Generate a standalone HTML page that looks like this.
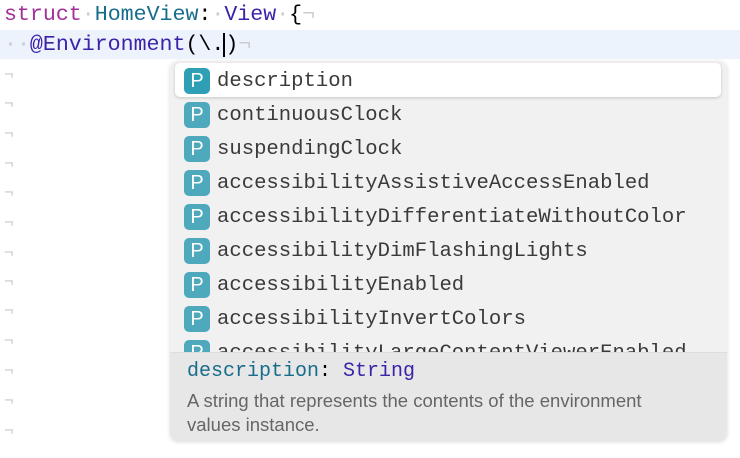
<!DOCTYPE html>
<html><head><style>
body{margin:0;width:740px;height:458px;background:#fff;position:relative;overflow:hidden;font-family:"Liberation Mono",monospace;}
.m{position:absolute;font-size:21.6px;white-space:pre;line-height:28px;}
.hl{position:absolute;left:0;top:30px;width:740px;height:29px;background:#ecf3fc;}
.ret{position:absolute;left:4px;color:#c8c8c8;font-size:16px;}
.pop{position:absolute;left:170px;top:61px;width:557px;height:380px;background:#f1f1f1;border-radius:8px;box-shadow:0 1px 4px rgba(0,0,0,.15);overflow:hidden;}
.row{position:absolute;left:0;width:557px;height:34px;}
.sel{position:absolute;left:5px;top:2px;width:546px;height:34px;background:#fff;border-radius:5px;box-shadow:0 1px 3px rgba(0,0,0,.18);}
.ic{position:absolute;left:14px;width:26px;height:26px;border-radius:5px;background:#4fa9bc;color:#fff;font-family:"Liberation Sans",sans-serif;font-size:20px;text-align:center;line-height:26px;}
.t{position:absolute;left:47px;top:2px;font-size:20.6px;color:#3a3a3a;white-space:pre;line-height:34px;}
.det{position:absolute;left:0;top:291px;width:557px;height:89px;background:#e7e7e7;border-top:1px solid #ddd;}
</style></head><body>
<div class="hl"></div>
<div class="m" style="left:4px;top:1px"><span style="color:#a2309a">struct</span><span style="color:#ccc">·</span><span style="color:#176c8c">HomeView</span>:<span style="color:#ccc">·</span><span style="color:#3c22a8">View</span><span style="color:#ccc">·</span>{<span style="color:#ccc">¬</span></div>
<div class="m" style="left:4px;top:31px"><span style="color:#ccc">··</span><span style="color:#3c22a8">@Environment</span>(\.<span style="border-left:2px solid #000;margin-left:-1px"></span>)<span style="color:#ccc">¬</span></div>
<div class="ret" style="top:66px">¬</div><div class="ret" style="top:95px">¬</div><div class="ret" style="top:125px">¬</div><div class="ret" style="top:155px">¬</div><div class="ret" style="top:184px">¬</div><div class="ret" style="top:214px">¬</div><div class="ret" style="top:244px">¬</div><div class="ret" style="top:273px">¬</div><div class="ret" style="top:302px">¬</div><div class="ret" style="top:332px">¬</div><div class="ret" style="top:362px">¬</div><div class="ret" style="top:392px">¬</div><div class="ret" style="top:422px">¬</div>
<div class="pop">
<div class="sel"></div>
<div class="row" style="top:2px"><div class="ic" style="top:5px;background:#2f9fb6">P</div><div class="t">description</div></div>
<div class="row" style="top:36px"><div class="ic" style="top:5px">P</div><div class="t">continuousClock</div></div>
<div class="row" style="top:70px"><div class="ic" style="top:5px">P</div><div class="t">suspendingClock</div></div>
<div class="row" style="top:104px"><div class="ic" style="top:5px">P</div><div class="t">accessibilityAssistiveAccessEnabled</div></div>
<div class="row" style="top:138px"><div class="ic" style="top:5px">P</div><div class="t">accessibilityDifferentiateWithoutColor</div></div>
<div class="row" style="top:172px"><div class="ic" style="top:5px">P</div><div class="t">accessibilityDimFlashingLights</div></div>
<div class="row" style="top:206px"><div class="ic" style="top:5px">P</div><div class="t">accessibilityEnabled</div></div>
<div class="row" style="top:240px"><div class="ic" style="top:5px">P</div><div class="t">accessibilityInvertColors</div></div>
<div class="row" style="top:274px"><div class="ic" style="top:5px">P</div><div class="t">accessibilityLargeContentViewerEnabled</div></div>
<div class="det">
<div style="position:absolute;left:17px;top:7px;font-size:20px;white-space:pre"><span style="color:#176c8c">description</span>: <span style="color:#3c22a8">String</span></div>
<div style="position:absolute;left:17px;top:36px;font-family:'Liberation Sans',sans-serif;font-size:18.5px;line-height:24px;color:#666;width:500px">A string that represents the contents of the environment values instance.</div>
</div>
</div>
</body></html>
